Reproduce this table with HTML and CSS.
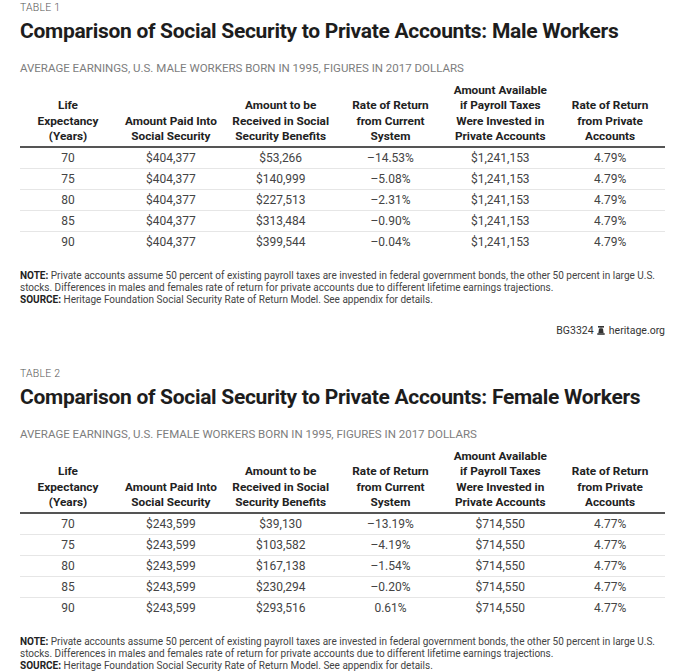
FILE: index.html
```html
<!DOCTYPE html>
<html lang="en">
<head>
<meta charset="utf-8">
<title>Comparison of Social Security to Private Accounts</title>
<link rel="stylesheet" href="styles.css">
</head>
<body>
<section class="exhibit">
  <div class="label">TABLE 1</div>
  <h1 class="title">Comparison of Social Security to Private Accounts: Male Workers</h1>
  <div class="subtitle">AVERAGE EARNINGS, U.S. MALE WORKERS BORN IN 1995, FIGURES IN 2017 DOLLARS</div>
  <table class="data">
    <colgroup><col class="c-first"><col><col><col><col><col></colgroup>
    <thead>
      <tr>
        <th>Life<br>Expectancy<br>(Years)</th>
        <th>Amount Paid Into<br>Social Security</th>
        <th>Amount to be<br>Received in Social<br>Security Benefits</th>
        <th>Rate of Return<br>from Current<br>System</th>
        <th>Amount Available<br>if Payroll Taxes<br>Were Invested in<br>Private Accounts</th>
        <th>Rate of Return<br>from Private<br>Accounts</th>
      </tr>
    </thead>
    <tbody>
      <tr><td>70</td><td>$404,377</td><td>$53,266</td><td>–14.53%</td><td>$1,241,153</td><td>4.79%</td></tr>
      <tr><td>75</td><td>$404,377</td><td>$140,999</td><td>–5.08%</td><td>$1,241,153</td><td>4.79%</td></tr>
      <tr><td>80</td><td>$404,377</td><td>$227,513</td><td>–2.31%</td><td>$1,241,153</td><td>4.79%</td></tr>
      <tr><td>85</td><td>$404,377</td><td>$313,484</td><td>–0.90%</td><td>$1,241,153</td><td>4.79%</td></tr>
      <tr><td>90</td><td>$404,377</td><td>$399,544</td><td>–0.04%</td><td>$1,241,153</td><td>4.79%</td></tr>
    </tbody>
  </table>
  <p class="notes"><b>NOTE:</b> Private accounts assume 50 percent of existing payroll taxes are invested in federal government bonds, the other 50 percent in large U.S.<br>stocks. Differences in males and females rate of return for private accounts due to different lifetime earnings trajections.<br><b>SOURCE:</b> Heritage Foundation Social Security Rate of Return Model. See appendix for details.</p>
  <div class="credit">BG3324
    <svg class="bell" viewBox="0 0 8 9" width="8" height="9" aria-hidden="true"><rect x="1" y="0" width="6" height="1.6" fill="#333"/><rect x="3.2" y="1.6" width="1.6" height="1" fill="#333"/><path d="M2 2.6 H6 L6.6 7 H1.4 Z" fill="#333"/><rect x="0.3" y="7.2" width="7.4" height="1.6" fill="#333"/></svg>
    heritage.org</div>
</section>

<section class="exhibit">
  <div class="label">TABLE 2</div>
  <h1 class="title">Comparison of Social Security to Private Accounts: Female Workers</h1>
  <div class="subtitle">AVERAGE EARNINGS, U.S. FEMALE WORKERS BORN IN 1995, FIGURES IN 2017 DOLLARS</div>
  <table class="data">
    <colgroup><col class="c-first"><col><col><col><col><col></colgroup>
    <thead>
      <tr>
        <th>Life<br>Expectancy<br>(Years)</th>
        <th>Amount Paid Into<br>Social Security</th>
        <th>Amount to be<br>Received in Social<br>Security Benefits</th>
        <th>Rate of Return<br>from Current<br>System</th>
        <th>Amount Available<br>if Payroll Taxes<br>Were Invested in<br>Private Accounts</th>
        <th>Rate of Return<br>from Private<br>Accounts</th>
      </tr>
    </thead>
    <tbody>
      <tr><td>70</td><td>$243,599</td><td>$39,130</td><td>–13.19%</td><td>$714,550</td><td>4.77%</td></tr>
      <tr><td>75</td><td>$243,599</td><td>$103,582</td><td>–4.19%</td><td>$714,550</td><td>4.77%</td></tr>
      <tr><td>80</td><td>$243,599</td><td>$167,138</td><td>–1.54%</td><td>$714,550</td><td>4.77%</td></tr>
      <tr><td>85</td><td>$243,599</td><td>$230,294</td><td>–0.20%</td><td>$714,550</td><td>4.77%</td></tr>
      <tr><td>90</td><td>$243,599</td><td>$293,516</td><td>0.61%</td><td>$714,550</td><td>4.77%</td></tr>
    </tbody>
  </table>
  <p class="notes"><b>NOTE:</b> Private accounts assume 50 percent of existing payroll taxes are invested in federal government bonds, the other 50 percent in large U.S.<br>stocks. Differences in males and females rate of return for private accounts due to different lifetime earnings trajections.<br><b>SOURCE:</b> Heritage Foundation Social Security Rate of Return Model. See appendix for details.</p>
</section>
</body>
</html>
```

FILE: styles.css
```css
html, body {
  margin: 0;
  padding: 0;
  background: #ffffff;
}

body {
  font-family: Roboto, "Liberation Sans", sans-serif;
  color: #333;
}

.exhibit {
  padding: 2px 9px 28px 20px;
  width: 645px;
}

.label {
  font-size: 10.5px;
  line-height: 12px;
  font-weight: 300;
  color: #555;
  letter-spacing: 0.2px;
}

.title {
  margin: 4px 0 0;
  font-size: 21px;
  line-height: 26px;
  font-weight: 700;
  color: #1d1d1d;
  letter-spacing: -0.3px;
}

.subtitle {
  margin-top: 17px;
  font-size: 11.5px;
  line-height: 14px;
  color: #7d7d7d;
}

.data {
  margin-top: 8px;
  width: 645px;
  border-collapse: collapse;
  table-layout: fixed;
}

.data .c-first {
  width: 96px;
}

.data th {
  font-size: 11.8px;
  line-height: 15.3px;
  font-weight: 700;
  color: #222;
  text-align: center;
  vertical-align: bottom;
  padding: 0 0 2px;
  border-bottom: 2px solid #555;
}

.data td {
  font-size: 12px;
  line-height: 20px;
  color: #444;
  text-align: center;
  padding: 0;
  border-bottom: 1px solid #e6e6e6;
}

.data tbody tr:last-child td {
  border-bottom: none;
}

.notes {
  margin: 18px 0 0;
  font-size: 10px;
  line-height: 12px;
  color: #444;
}

.notes b {
  color: #222;
  font-weight: 700;
}

.credit {
  margin-top: 18px;
  font-size: 10.5px;
  line-height: 14px;
  color: #333;
  text-align: right;
}

.bell {
  vertical-align: -1px;
  margin: 0 1px;
}
```
